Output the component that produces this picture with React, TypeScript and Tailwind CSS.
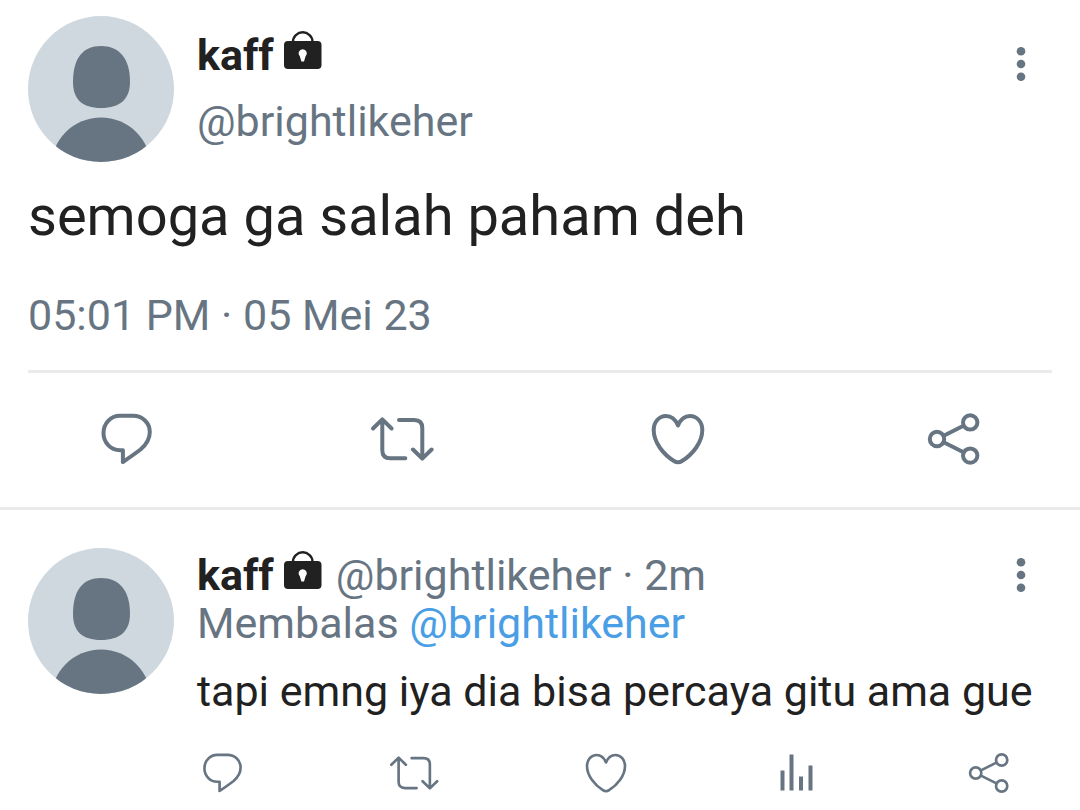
import type { ReactNode } from "react";

function Avatar() {
  return (
    <svg viewBox="0 0 146 146" className="size-[146px] shrink-0" role="img" aria-label="Foto profil kaff">
      <defs>
        <clipPath id="avatar-clip">
          <circle cx="73" cy="73" r="73" />
        </clipPath>
      </defs>
      <g clipPath="url(#avatar-clip)">
        <rect width="146" height="146" fill="#cfd8de" />
        <path
          d="M73 30C91 30 102 42 102 66C102 83 92 92 73 92C54 92 45 83 45 66C45 42 55 30 73 30Z"
          fill="#677583"
        />
        <circle cx="73" cy="151.500" r="50" fill="#677583" />
      </g>
    </svg>
  );
}

function LockIcon() {
  return (
    <svg viewBox="0 0 38 38" className="size-[38px] shrink-0" role="img" aria-label="Akun terkunci">
      <path d="M9 12V10.500C9 5.500 13.500 1.300 18.700 1.300S28.500 5.500 28.500 10.500V12" fill="none" stroke="#212121" strokeWidth="2.400" />
      <rect x="0" y="10" width="37.500" height="28" rx="4" fill="#212121" />
      <path d="M18.700 18.300A4.200 4.200 0 0 1 21.500 25.600L20 30.500H17.400L15.900 25.600A4.200 4.200 0 0 1 18.700 18.300Z" fill="#fff" />
    </svg>
  );
}

function Icon({ small, children }: { small?: boolean; children: ReactNode }) {
  return (
    <svg
      viewBox="0 0 64 64"
      className={small ? "size-[50px]" : "size-16"}
      fill="none"
      stroke="currentColor"
      strokeWidth={small ? 3.4 : 4}
      strokeLinecap="round"
      strokeLinejoin="round"
      aria-hidden="true"
    >
      {children}
    </svg>
  );
}

type IconProps = { small?: boolean };

const ReplyIcon = ({ small }: IconProps) => (
  <Icon small={small}>
    <path d="M26 8.800H39C48.500 8.800 55.800 16 55.800 25C55.800 32.500 52.500 37.500 46.500 42.500C42 46 35.500 50.500 28.900 55V43.200H26C16.500 43.200 9.500 35.500 9.500 26C9.500 16.500 16.500 8.800 26 8.800Z" />
  </Icon>
);

const RetweetIcon = ({ small }: IconProps) => (
  <Icon small={small}>
    <path d="M3 21.500L12.300 12.300L21.600 21.500M12.300 12.500V43.300Q12.300 51.300 20.300 51.300H35.300" />
    <path d="M29 13H44.300Q52.300 13 52.300 21V51.500M43 42.500L52.300 51.700L61.600 42.500" />
  </Icon>
);

const LikeIcon = ({ small }: IconProps) => (
  <Icon small={small}>
    <path d="M32 18.400C29.500 12.500 25 9 20 9C13 9 7.700 15 7.700 23C7.700 35.500 17.500 47.500 28 54C30.700 55.800 33.300 55.800 36 54C46.500 47.500 56.300 35.500 56.300 23C56.300 15 51 9 44 9C39 9 34.500 12.500 32 18.400Z" />
  </Icon>
);

const ShareIcon = ({ small }: IconProps) => (
  <Icon small={small}>
    <circle cx="15" cy="32" r="7.200" />
    <circle cx="48.200" cy="15.400" r="7.200" />
    <circle cx="48.200" cy="48.600" r="7.200" />
    <path d="M21.700 28.700L41.500 18.700M21.700 35.300L41.500 45.300" />
  </Icon>
);

const StatsIcon = () => (
  <svg viewBox="0 0 50 50" className="size-[50px]" fill="currentColor" aria-hidden="true">
    <rect x="8.500" y="22.500" width="4" height="20" />
    <rect x="17.500" y="6.500" width="4" height="36" />
    <rect x="27" y="28.500" width="4" height="14" />
    <rect x="36.500" y="17.500" width="4" height="25" />
  </svg>
);

function Action({ label, children }: { label: string; children: ReactNode }) {
  return (
    <button type="button" aria-label={label} className="block">
      {children}
    </button>
  );
}

function MoreButton() {
  return (
    <button type="button" aria-label="Opsi lainnya" className="flex h-12 w-[62px] shrink-0 items-center justify-center">
      <svg viewBox="0 0 10 36" className="h-9 w-[10px]" fill="currentColor" aria-hidden="true">
        <circle cx="5" cy="5.200" r="4.300" />
        <circle cx="5" cy="18" r="4.300" />
        <circle cx="5" cy="30.800" r="4.300" />
      </svg>
    </button>
  );
}

function Name() {
  return (
    <span className="flex items-start gap-2.5 font-bold text-[#212121]">
      kaff
      <LockIcon />
    </span>
  );
}

export default function App() {
  return (
    <main className="min-h-screen bg-white font-['Roboto',sans-serif] text-[43px] leading-[48px] text-[#677583]">
      <article className="border-b-3 border-[#ebebeb] pt-4">
        <div className="px-7">
          <header className="flex gap-[23px]">
            <Avatar />
            <div className="flex flex-1 flex-col gap-[18px] pt-[15px]">
              <Name />
              <span>@brightlikeher</span>
            </div>
            <div className="pt-6">
              <MoreButton />
            </div>
          </header>
          <p className="pt-[22px] text-[56px] leading-[64px] text-[#212121]">semoga ga salah paham deh</p>
          <p className="border-b-3 border-[#ebebeb] pt-[43px] pb-[31px]">
            <time dateTime="2023-05-05T17:01">05:01 PM · 05 Mei 23</time>
          </p>
        </div>
        <div className="flex justify-between px-[94px] pt-[34px] pb-9">
          <Action label="Balas"><ReplyIcon /></Action>
          <Action label="Retweet"><RetweetIcon /></Action>
          <Action label="Suka"><LikeIcon /></Action>
          <Action label="Bagikan"><ShareIcon /></Action>
        </div>
      </article>

      <article className="flex gap-[23px] pt-[38px] pl-7">
        <Avatar />
        <div className="min-w-0 flex-1 pt-[3px]">
          <header className="flex pr-7">
            <div className="flex flex-1 gap-[14px]">
              <Name />
              <span>@brightlikeher · 2m</span>
            </div>
            <MoreButton />
          </header>
          <p>
            Membalas <a href="#brightlikeher" className="text-[#4a9ee5]">@brightlikeher</a>
          </p>
          <p className="pt-5 whitespace-nowrap text-[#212121]">tapi emng iya dia bisa percaya gitu ama gue</p>
          <div className="flex justify-between pt-[33px] pr-[66px]">
            <Action label="Balas"><ReplyIcon small /></Action>
            <Action label="Retweet"><RetweetIcon small /></Action>
            <Action label="Suka"><LikeIcon small /></Action>
            <Action label="Statistik"><StatsIcon /></Action>
            <Action label="Bagikan"><ShareIcon small /></Action>
          </div>
        </div>
      </article>
    </main>
  );
}
